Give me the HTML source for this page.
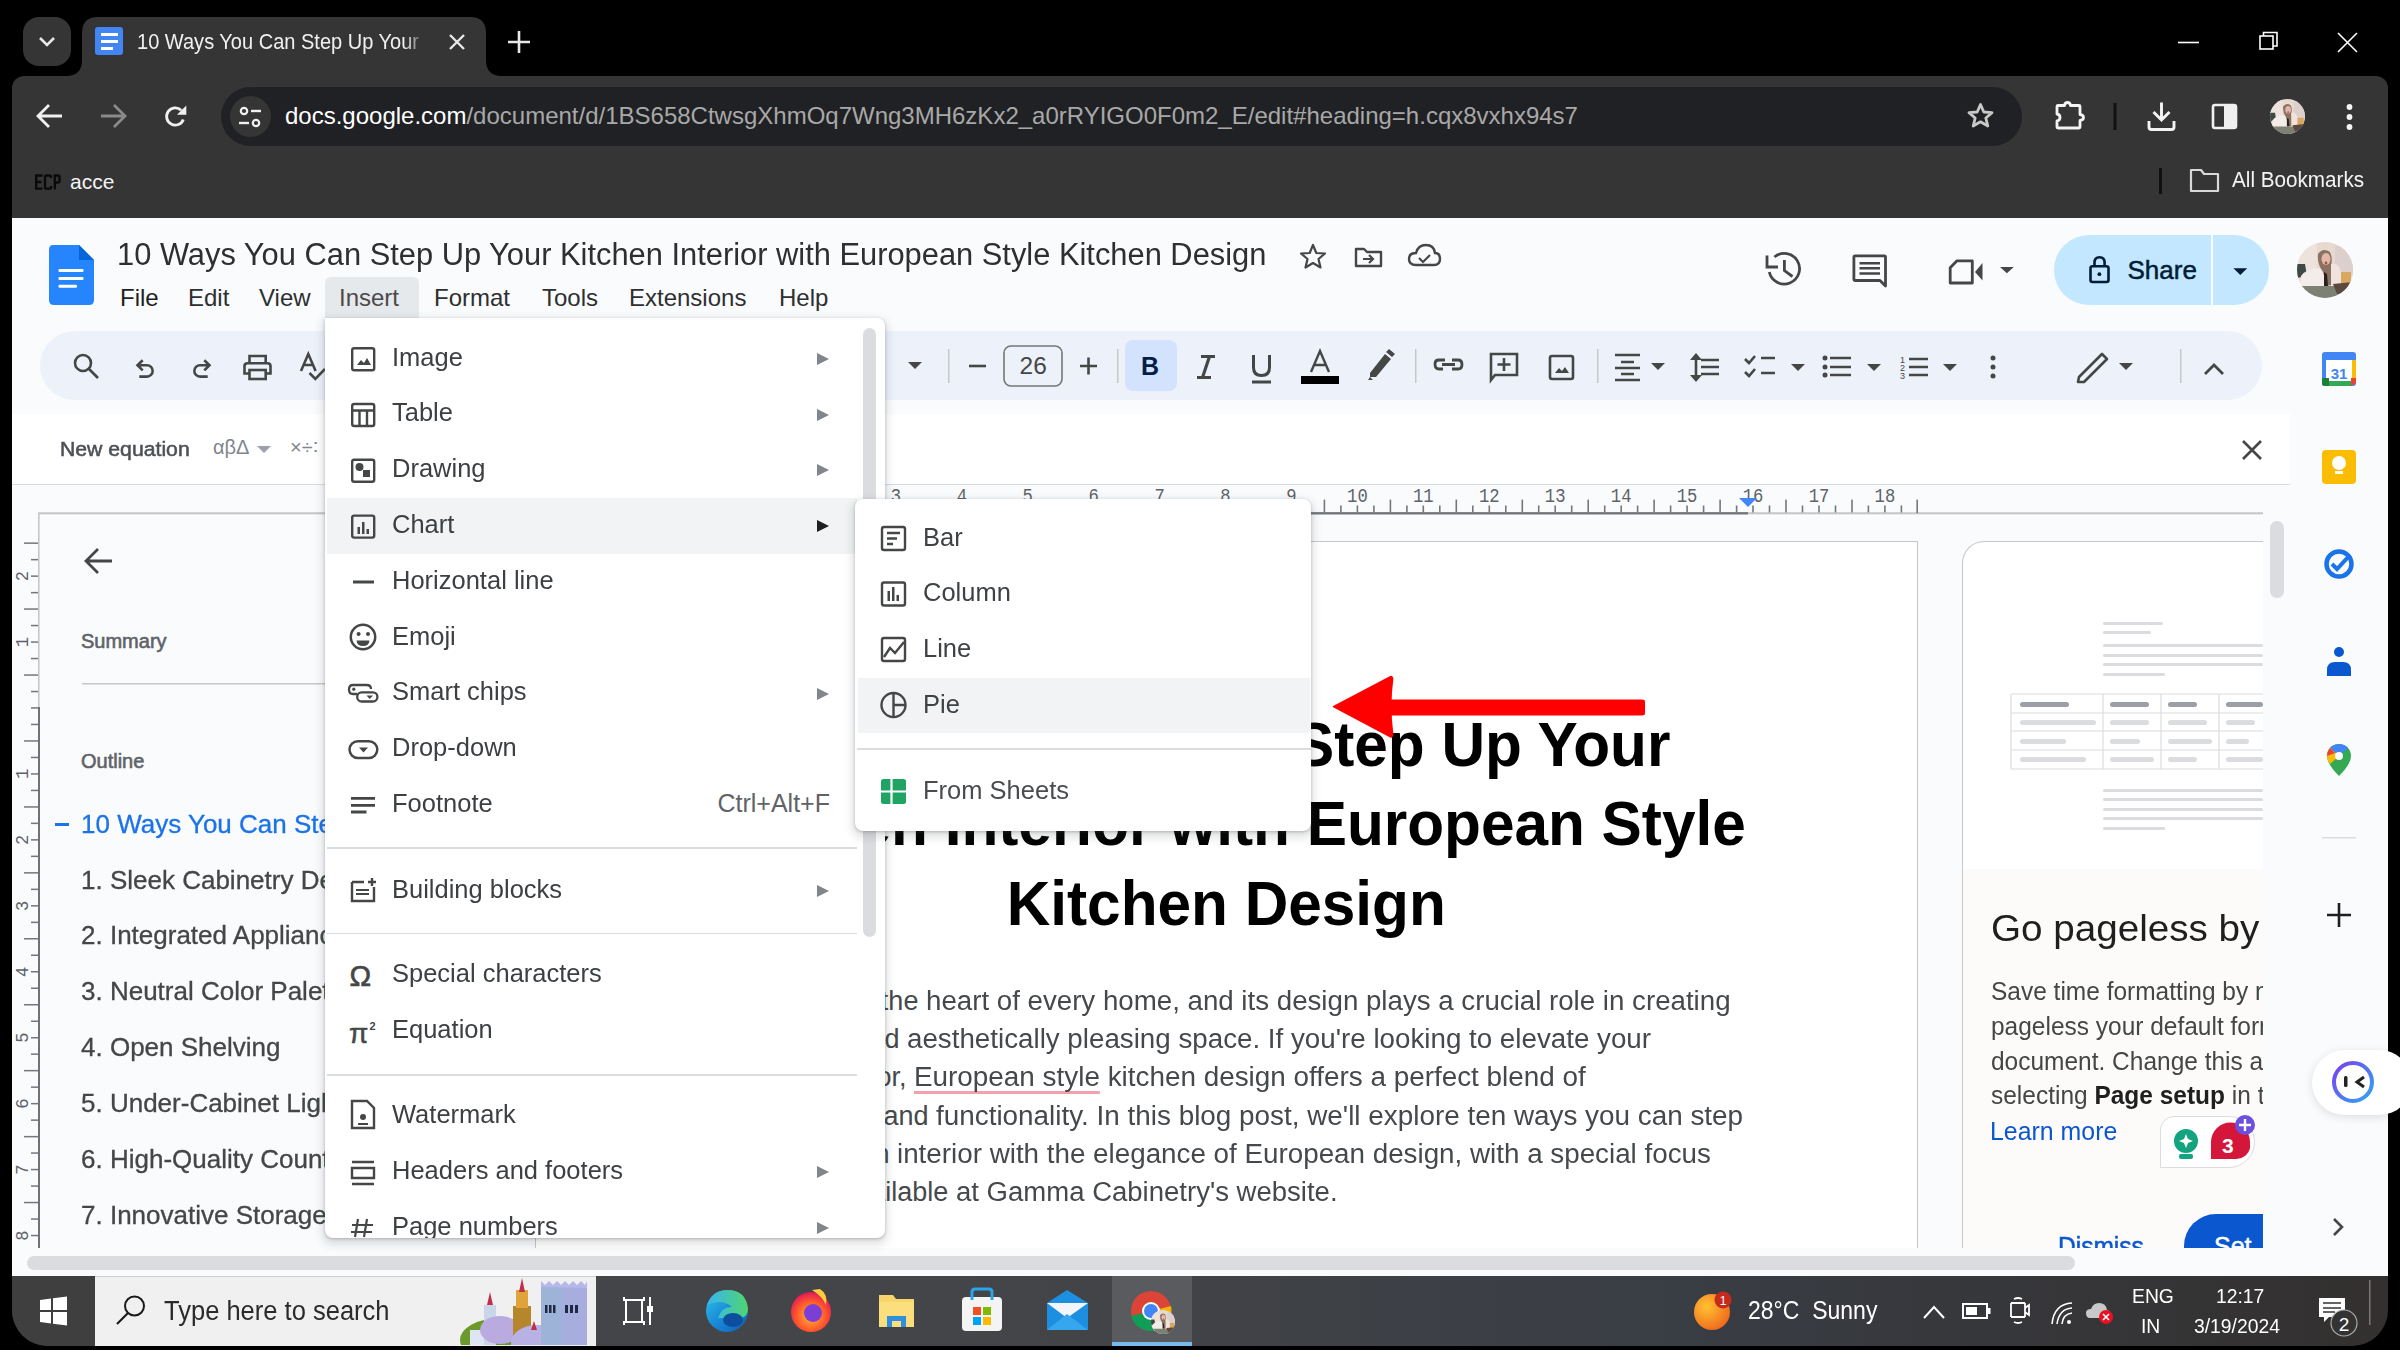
<!DOCTYPE html>
<html><head><meta charset="utf-8">
<style>
*{margin:0;padding:0;box-sizing:border-box}
html,body{width:2400px;height:1350px;overflow:hidden;background:#000;font-family:"Liberation Sans",sans-serif}
.a{position:absolute}
.t{position:absolute;white-space:nowrap;line-height:1}
svg{position:absolute;overflow:visible}
</style></head><body>
<svg width="0" height="0" style="position:absolute"><defs>
<symbol id="av" viewBox="0 0 56 56">
 <clipPath id="avc"><circle cx="28" cy="28" r="28"/></clipPath>
 <g clip-path="url(#avc)">
  <rect width="56" height="56" fill="#e7d8d0"/>
  <rect x="0" y="0" width="20" height="30" fill="#eee2dc"/>
  <rect x="38" y="4" width="18" height="30" fill="#ddd0cc"/>
  <path d="M0 22 L8 22 L10 34 L0 36 Z" fill="#3f4a44"/>
  <path d="M2 50 L4 34 Q10 26 22 26 L30 32 L32 44 L20 48 Z" fill="#f3ece8"/>
  <path d="M21 12 Q26 5 33 10 Q36 16 34 24 L38 42 L30 44 L26 30 Q20 22 21 12 Z" fill="#8a7262"/>
  <ellipse cx="29" cy="17" rx="4.5" ry="6" fill="#e4b8a8"/>
  <circle cx="29" cy="21" r="1.4" fill="#b5484a"/>
  <path d="M27 30 L30 32 L31 44 L27 44 Z" fill="#2a211e"/>
  <path d="M34 22 Q42 20 44 30 L44 44 L34 44 Z" fill="#f0e2dd"/>
  <rect x="44" y="30" width="10" height="14" fill="#d9a860"/>
  <path d="M0 44 L56 44 L56 56 L0 56 Z" fill="#7d8174"/>
  <path d="M36 42 L56 40 L56 50 L40 52 Z" fill="#5c4940"/>
 </g>
</symbol></defs></svg>
<!-- ============ CHROME TAB STRIP ============ -->
<div class="a" style="left:23px;top:17px;width:48px;height:49px;background:#353535;border-radius:16px"></div>
<svg style="left:0;top:0" width="2400" height="80">
  <path d="M40 38 L47 45 L54 38" stroke="#e8e8e8" stroke-width="2.6" fill="none"/>
</svg>
<!-- active tab -->
<svg style="left:0;top:0" width="600" height="80">
  <path d="M66 76 Q82 76 82 60 L82 33 Q82 17 98 17 L470 17 Q486 17 486 33 L486 60 Q486 76 502 76 Z" fill="#353535"/>
</svg>
<div class="a" style="left:95px;top:27px;width:28px;height:28px;background:#4285f4;border-radius:3px"></div>
<div class="a" style="left:101px;top:33px;width:17px;height:3px;background:#fff"></div>
<div class="a" style="left:101px;top:40px;width:17px;height:3px;background:#fff"></div>
<div class="a" style="left:101px;top:47px;width:12px;height:3px;background:#fff"></div>
<div class="a" style="left:137px;top:25px;width:295px;height:35px;overflow:hidden"><div class="t" style="left:0;top:6.4px;font-size:22px;color:#f0f0f0;transform:scaleX(0.91);transform-origin:0 0">10 Ways You Can Step Up Your Kitchen</div></div>
<div class="a" style="left:405px;top:20px;width:30px;height:45px;background:linear-gradient(90deg,rgba(53,53,53,0),#353535 70%)"></div>
<svg style="left:0;top:0" width="2400" height="80">
  <path d="M450 35 L464 49 M464 35 L450 49" stroke="#e8e8e8" stroke-width="2.4"/>
  <path d="M519 31 L519 53 M508 42 L530 42" stroke="#e8e8e8" stroke-width="2.6"/>
  <path d="M2178 42.5 L2199 42.5" stroke="#fff" stroke-width="1.6"/>
  <rect x="2260" y="36" width="13" height="13" stroke="#fff" stroke-width="1.6" fill="none"/>
  <path d="M2263.5 36 L2263.5 32.5 L2277 32.5 L2277 46 L2273 46" stroke="#fff" stroke-width="1.6" fill="none"/>
  <path d="M2338 33 L2357 52 M2357 33 L2338 52" stroke="#fff" stroke-width="1.6"/>
</svg>
<!-- ============ CHROME TOOLBAR ============ -->
<div class="a" style="left:12px;top:76px;width:2376px;height:142px;background:#353535;border-radius:12px 12px 0 0"></div>
<svg style="left:0;top:76px" width="2400" height="142">
  <path d="M38 40 L62 40 M49 29 L38 40 L49 51" stroke="#f0f0f0" stroke-width="2.8" fill="none"/>
  <path d="M101 40 L125 40 M114 29 L125 40 L114 51" stroke="#8a8a8a" stroke-width="2.8" fill="none"/>
  <path d="M183.3 43.4 A8.6 8.6 0 1 1 181.2 34.3" stroke="#f0f0f0" stroke-width="2.8" fill="none"/>
  <path d="M186.3 29.5 L186.3 38.8 L177 38.8 Z" fill="#f0f0f0"/>
</svg>
<div class="a" style="left:221px;top:87px;width:1801px;height:59px;background:#202124;border-radius:30px"></div>
<div class="a" style="left:230px;top:96px;width:41px;height:41px;background:#353535;border-radius:50%"></div>
<svg style="left:0;top:76px" width="2400" height="142">
  <circle cx="244" cy="35" r="3.2" stroke="#f0f0f0" stroke-width="2.2" fill="none"/>
  <path d="M251 35 L261 35" stroke="#f0f0f0" stroke-width="2.4"/>
  <circle cx="256" cy="47" r="3.2" stroke="#f0f0f0" stroke-width="2.2" fill="none"/>
  <path d="M239 47 L249 47" stroke="#f0f0f0" stroke-width="2.4"/>
</svg>
<div class="t" style="left:285px;top:104px;font-size:24px;color:#fff">docs.google.com<span style="color:#a8a8a8">/document/d/1BS658CtwsgXhmOq7Wng3MH6zKx2_a0rRYIGO0F0m2_E/edit#heading=h.cqx8vxhx94s7</span></div>
<svg style="left:0;top:76px" width="2400" height="142">
  <path d="M1980.5 28.5 L1983.8 36 L1992 36.6 L1985.8 42 L1987.8 50 L1980.5 45.8 L1973.2 50 L1975.2 42 L1969 36.6 L1977.2 36 Z" stroke="#c8c8c8" stroke-width="2.8" fill="none" stroke-linejoin="round"/>
  <path d="M2058 29.5 L2064.5 29.5 Q2065 26.5 2067.5 26.5 Q2070 26.5 2070.5 29.5 L2079 29.5 Q2080 29.5 2080 30.5 L2080 38.5 Q2083.5 39 2083.5 41.5 Q2083.5 44 2080 44.5 L2080 51 Q2080 52 2079 52 L2058 52 Q2057 52 2057 51 L2057 45 Q2060 44.5 2060 41.5 Q2060 38.5 2057 38 L2057 30.5 Q2057 29.5 2058 29.5 Z" stroke="#f4f4f4" stroke-width="2.8" fill="none" stroke-linejoin="round"/>
  <path d="M2115 27 L2115 54" stroke="#111" stroke-width="3"/>
  <path d="M2161.5 26.5 L2161.5 43.5 M2153.5 36 L2161.5 44 L2169.5 36 M2149 45 L2149 51 Q2149 53.5 2151.5 53.5 L2171.5 53.5 Q2174 53.5 2174 51 L2174 45" stroke="#f4f4f4" stroke-width="2.9" fill="none"/>
  <rect x="2213" y="29" width="23" height="23" rx="2" stroke="#f0f0f0" stroke-width="2.6" fill="none"/>
  <rect x="2224" y="29" width="12" height="23" fill="#f0f0f0"/>
  <circle cx="2349.5" cy="31" r="2.9" fill="#f4f4f4"/><circle cx="2349.5" cy="41" r="2.9" fill="#f4f4f4"/><circle cx="2349.5" cy="51" r="2.9" fill="#f4f4f4"/>
</svg>
<svg style="left:2269.5px;top:98.5px;filter:blur(0.5px)" width="35" height="35" viewBox="0 0 56 56"><use href="#av"/></svg>
<!-- bookmarks bar -->
<svg style="left:0;top:0" width="200" height="220"><g stroke="#0a0a0a" stroke-width="2.4" fill="none">
 <path d="M42.5 175.5 L36.2 175.5 L36.2 188.6 L42.5 188.6 M36.2 182 L41.5 182"/>
 <path d="M51 178 L51 176.8 Q51 175.5 49.5 175.5 L46.5 175.5 Q45 175.5 45 177 L45 187.2 Q45 188.6 46.5 188.6 L49.5 188.6 Q51 188.6 51 187.2 L51 186"/>
 <path d="M54.8 189.5 L54.8 175.5 L58 175.5 Q59.5 175.5 59.5 177 L59.5 181 Q59.5 182.5 58 182.5 L54.8 182.5"/>
</g></svg>
<div class="t" style="left:70px;top:170.5px;font-size:21px;color:#f4f4f4">acce</div>
<div class="a" style="left:2159px;top:168px;width:3px;height:26px;background:#111"></div>
<svg style="left:0;top:150px" width="2400" height="70">
  <path d="M2191 20 L2201 20 L2204 24 L2218 24 L2218 41 L2191 41 Z" stroke="#d8d8d8" stroke-width="2.2" fill="none" stroke-linejoin="round"/>
</svg>
<div class="t" style="left:2231.5px;top:169.2px;font-size:22px;color:#f4f4f4;transform:scaleX(0.94);transform-origin:0 0">All Bookmarks</div>

<!-- ============ DOCS AREA ============ -->

<div class="a" style="left:12px;top:218px;width:2376px;height:1058px;background:#f9fbfd"></div>
<!-- docs logo -->
<svg style="left:0;top:0" width="2400" height="1350">
  <path d="M53 245 L79 245 L94 260 L94 300 Q94 305 89 305 L54 305 Q49 305 49 300 L49 250 Q49 245 53 245 Z" fill="#2684fc"/>
  <path d="M79 245 L94 260 L79 260 Z" fill="#0066da"/>
  <rect x="58.5" y="269.1" width="25" height="3" rx="1" fill="#fff"/>
  <rect x="58.5" y="277.1" width="25" height="3" rx="1" fill="#fff"/>
  <rect x="58.5" y="284.8" width="18.5" height="3" rx="1" fill="#fff"/>
</svg>
<div class="t" style="left:117px;top:238.6px;font-size:31px;color:#2f2f2f;transform:scaleX(0.995);transform-origin:0 0">10 Ways You Can Step Up Your Kitchen Interior with European Style Kitchen Design</div>
<svg style="left:0;top:0" width="2400" height="1350">
  <path d="M1313 245 L1316.3 253 L1325 253.5 L1318.5 259 L1320.5 267.5 L1313 263 L1305.5 267.5 L1307.5 259 L1301 253.5 L1309.7 253 Z" stroke="#444746" stroke-width="2.2" fill="none" stroke-linejoin="round"/>
  <path d="M1356 249 L1364 249 L1367 252 L1381 252 L1381 266 L1356 266 Z" stroke="#444746" stroke-width="2.4" fill="none" stroke-linejoin="round"/>
  <path d="M1363 259 L1373 259 M1369 255 L1373 259 L1369 263" stroke="#444746" stroke-width="2.2" fill="none"/>
  <path d="M1416 265 Q1409 265 1409 259 Q1409 253 1416 253 Q1418 245 1426 245 Q1434 245 1435 253 Q1440 253 1440 259 Q1440 265 1434 265 Z" stroke="#444746" stroke-width="2.4" fill="none"/>
  <path d="M1419 258 L1423 262 L1430 255" stroke="#444746" stroke-width="2.2" fill="none"/>
</svg>
<div class="a" style="left:325px;top:277px;width:94px;height:41px;background:#e6e9ec;border-radius:6px 6px 0 0"></div>
<div class="t" style="left:120px;top:286px;font-size:24px;color:#1f1f1f;word-spacing:0">File</div>
<div class="t" style="left:188px;top:286px;font-size:24px;color:#2f2f2f">Edit</div>
<div class="t" style="left:259px;top:286px;font-size:24px;color:#2f2f2f">View</div>
<div class="t" style="left:339px;top:286px;font-size:24px;color:#4a4a4a">Insert</div>
<div class="t" style="left:434px;top:286px;font-size:24px;color:#2f2f2f">Format</div>
<div class="t" style="left:542px;top:286px;font-size:24px;color:#2f2f2f">Tools</div>
<div class="t" style="left:629px;top:286px;font-size:24px;color:#2f2f2f">Extensions</div>
<div class="t" style="left:779px;top:286px;font-size:24px;color:#2f2f2f">Help</div>
<!-- right header -->
<svg style="left:0;top:0" width="2400" height="1350">
  <path d="M1774.4 257 A15.3 15.3 0 1 1 1769.3 272" stroke="#444746" stroke-width="2.8" fill="none"/>
  <path d="M1767 255.5 L1767 267 L1778 267" stroke="#444746" stroke-width="2.8" fill="none"/>
  <path d="M1784.4 260 L1784.4 270.6 L1792.5 276.5" stroke="#444746" stroke-width="2.8" fill="none"/>
  <path d="M1855 255.8 L1884.5 255.8 Q1885.5 255.8 1885.5 257 L1885.5 286 L1880 280.5 L1855 280.5 Q1853.9 280.5 1853.9 279.5 L1853.9 257 Q1853.9 255.8 1855 255.8 Z" stroke="#444746" stroke-width="2.8" fill="none" stroke-linejoin="round"/>
  <path d="M1859.5 263.2 L1880 263.2 M1859.5 268.3 L1880 268.3 M1859.5 273.5 L1880 273.5" stroke="#444746" stroke-width="2.6"/>
  <path d="M1950.2 267.8 L1957 260.8 L1972.3 260.8 L1972.3 283 L1950.2 283 Z" stroke="#444746" stroke-width="2.8" fill="none" stroke-linejoin="round"/>
  <path d="M1975 272 L1982.5 263 L1982.5 280.5 Z" fill="#444746"/>
  <path d="M2000 267 L2013.8 267 L2006.9 273.3 Z" fill="#444746"/>
</svg>
<div class="a" style="left:2054px;top:235px;width:215px;height:70px;background:#c2e7ff;border-radius:35px"></div>
<div class="a" style="left:2211px;top:235px;width:2px;height:70px;background:#f9fbfd"></div>
<svg style="left:0;top:0" width="2400" height="1350">
  <rect x="2090.5" y="266.2" width="18" height="15.8" rx="2" stroke="#001d35" stroke-width="2.6" fill="none"/>
  <path d="M2094.5 266 L2094.5 262.5 Q2094.5 257.2 2099.5 257.2 Q2104.6 257.2 2104.6 262.5 L2104.6 266" stroke="#001d35" stroke-width="2.6" fill="none"/>
  <circle cx="2099.4" cy="274.2" r="1.9" fill="#001d35"/>
  <path d="M2233.4 268.2 L2247.2 268.2 L2240.3 275 Z" fill="#001d35"/>
</svg>
<div class="t" style="left:2127.5px;top:256.5px;font-size:26px;color:#001d35;-webkit-text-stroke:0.5px #001d35">Share</div>
<svg style="left:2297px;top:241.7px;filter:blur(0.7px)" width="56" height="56" viewBox="0 0 56 56"><use href="#av"/></svg>
<!-- toolbar pill -->
<div class="a" style="left:40px;top:331px;width:2222px;height:69px;background:#edf2fa;border-radius:35px"></div>
<svg style="left:0;top:0" width="2400" height="1350">
 <g stroke="#444746" fill="none" stroke-width="2.6">
  <circle cx="83" cy="363" r="8"/><path d="M89 369 L98 378"/>
  <path d="M139.3 376.6 L147 376.6 A5.65 5.65 0 0 0 147 365.3 L137.5 365.3 M142.7 360.2 L137.5 365.3 L142.7 370.4" stroke-width="2.6"/>
  <path d="M207.7 376.6 L200 376.6 A5.65 5.65 0 0 1 200 365.3 L209.5 365.3 M204.3 360.2 L209.5 365.3 L204.3 370.4" stroke-width="2.6"/>
  <path d="M249.5 362.5 L249.5 356 L265.7 356 L265.7 362.5" stroke-width="2.6"/>
  <path d="M249.5 373.5 L244.5 373.5 L244.5 366 Q244.5 363.2 247.5 363.2 L267.5 363.2 Q270.5 363.2 270.5 366 L270.5 373.5 L265.7 373.5" stroke-width="2.6"/>
  <rect x="249.5" y="370" width="16.2" height="9" stroke-width="2.6"/>
  <path d="M301 371 L308.3 354 L315.6 371 M303.6 365 L313 365" stroke-width="2.6"/>
  <path d="M309.5 373 L315.3 378.8 L325 369" stroke-width="2.6"/>
  <path d="M908 362 L922 362 L915 369 Z" fill="#444746" stroke="none"/>
 </g>
 <g fill="#c7c7c7"><rect x="948" y="349" width="1.5" height="34"/><rect x="1117" y="349" width="1.5" height="34"/><rect x="1415" y="349" width="1.5" height="34"/><rect x="1597" y="349" width="1.5" height="34"/><rect x="2180" y="349" width="1.5" height="34"/></g>
 <g stroke="#444746" fill="none" stroke-width="2.6">
  <path d="M969 366 L986 366"/>
  <rect x="1004" y="346" width="58" height="40" rx="7" stroke="#747775" stroke-width="1.6"/>
  <path d="M1080 366 L1097 366 M1088.5 357.5 L1088.5 374.5"/>
 </g>
 <rect x="1125" y="340" width="52" height="51" rx="8" fill="#d3e3fd"/>
 <g stroke="#444746" fill="none" stroke-width="2.6">
  <path d="M1201 356.5 L1215 356.5 M1197 377.5 L1211 377.5 M1209.5 356.5 L1202.5 377.5" stroke-width="3.2"/>
  <path d="M1253.5 355 L1253.5 367.5 Q1253.5 375.5 1261.5 375.5 Q1269.5 375.5 1269.5 367.5 L1269.5 355 M1252 382 L1271 382" stroke-width="3"/>
  <path d="M1311 372 L1320 351 L1329 372 M1314 365 L1326 365" stroke-width="2.4"/>
 </g>
 <rect x="1301" y="376" width="38" height="8" fill="#000"/>
 <path d="M1370 373 L1385 354 L1391 359 L1376 377 L1370 377 Z M1386 352 L1389 349 L1395 354 L1392 357 Z M1370 377 L1368 380 L1373 380 Z" fill="#444746"/>
 <g stroke="#444746" fill="none" stroke-width="2.6">
  <path d="M1443 369 L1439 369 Q1435 369 1435 364 Q1435 360 1439 360 L1445 360 M1452 360 L1458 360 Q1462 360 1462 364.5 Q1462 369 1458 369 L1452 369 M1442 364.5 L1455 364.5" stroke-width="2.8"/>
  <path d="M1491 354 L1517 354 L1517 375 L1495 375 L1491 380 Z M1504 358 L1504 371 M1497.5 364.5 L1510.5 364.5"/>
  <rect x="1550" y="356" width="23" height="23" rx="2"/>
 </g>
 <path d="M1555 373 L1559 368 L1562 371 L1565 367 L1569 373 Z" fill="#444746"/>
 <g stroke="#444746" stroke-width="2.6">
  <path d="M1615 355 L1640 355 M1621 362 L1634 362 M1615 368 L1640 368 M1621 374 L1634 374 M1615 380 L1640 380"/>
  <path d="M1701 360 L1719 360 M1701 367 L1719 367 M1701 374 L1719 374"/>
  <path d="M1696 355 L1696 380"/>
  <path d="M1761 358 L1775 358 M1761 373 L1775 373"/>
  <path d="M1745 359 L1749 363 L1755 356 M1745 372 L1749 376 L1755 369" fill="none"/>
  <path d="M1830 358 L1851 358 M1830 367 L1851 367 M1830 375 L1851 375"/>
  <path d="M1909 359 L1928 359 M1909 367 L1928 367 M1909 375 L1928 375"/>
 </g>
 <path d="M1690 360 L1696 353 L1702 360 Z M1690 375 L1696 382 L1702 375 Z" fill="#444746"/>
 <g fill="#444746">
  <circle cx="1825" cy="358" r="2.5"/><circle cx="1825" cy="367" r="2.5"/><circle cx="1825" cy="375" r="2.5"/>
  <circle cx="1993" cy="358" r="2.5"/><circle cx="1993" cy="367" r="2.5"/><circle cx="1993" cy="376" r="2.5"/>
  <path d="M1651 363 L1665 363 L1658 370 Z"/><path d="M1791 364 L1805 364 L1798 371 Z"/><path d="M1867 364 L1881 364 L1874 371 Z"/><path d="M1943 364 L1957 364 L1950 371 Z"/><path d="M2119 363 L2133 363 L2126 370 Z"/>
 </g>
 <text x="1900" y="363" font-size="9" fill="#444746" font-family="Liberation Sans">1</text>
 <text x="1900" y="371" font-size="9" fill="#444746" font-family="Liberation Sans">2</text>
 <text x="1900" y="379" font-size="9" fill="#444746" font-family="Liberation Sans">3</text>
 <path d="M2079 377 L2102 354 L2107 359 L2084 382 L2078 382 Z" stroke="#444746" stroke-width="2.6" fill="none" stroke-linejoin="round"/>
 <path d="M2205 374 L2214 365 L2223 374" stroke="#444746" stroke-width="2.8" fill="none"/>
</svg>
<div class="t" style="left:1019.5px;top:353.5px;font-size:24.5px;color:#444746">26</div>
<div class="t" style="left:1141px;top:354px;font-size:25px;color:#041e49;font-weight:bold">B</div>



<!-- equation bar -->
<div class="a" style="left:12px;top:414px;width:2278px;height:71px;background:#fff;border-bottom:1.5px solid #dadce0"></div>
<div class="t" style="left:59.5px;top:438.2px;font-size:21px;color:#4d5156;-webkit-text-stroke:0.55px #4d5156;transform:scaleX(1.01);transform-origin:0 0">New equation</div>
<div class="t" style="left:213px;top:437px;font-size:20px;color:#80868b">αβΔ</div>
<svg style="left:0;top:0" width="2400" height="1350">
 <path d="M257 446 L271 446 L264 453 Z" fill="#9aa0a6"/>
 <path d="M2243 441 L2261 459 M2261 441 L2243 459" stroke="#444746" stroke-width="2.6"/>
</svg>
<div class="t" style="left:290px;top:437px;font-size:20px;color:#80868b">×÷∶</div>
<!-- page -->
<div class="a" style="left:535px;top:541px;width:1383px;height:707px;background:#fff;border:1.5px solid #c7c7c7;border-bottom:none"></div>
<svg style="left:0;top:0" width="2400" height="1350">
<rect x="548.8" y="505.5" width="1.6" height="8" fill="#74787c"/>
<text transform="translate(566.1,502) scale(0.84,1)" font-size="20.5" fill="#5f6368" text-anchor="middle" font-family="Liberation Mono">2</text>
<rect x="565.3" y="505.5" width="1.6" height="8" fill="#74787c"/>
<rect x="581.8" y="505.5" width="1.6" height="8" fill="#74787c"/>
<rect x="598.3" y="499.6" width="1.6" height="13.6" fill="#74787c"/>
<rect x="614.8" y="505.5" width="1.6" height="8" fill="#74787c"/>
<text transform="translate(632.1,502) scale(0.84,1)" font-size="20.5" fill="#5f6368" text-anchor="middle" font-family="Liberation Mono">1</text>
<rect x="631.3" y="505.5" width="1.6" height="8" fill="#74787c"/>
<rect x="647.7" y="505.5" width="1.6" height="8" fill="#74787c"/>
<rect x="664.2" y="499.6" width="1.6" height="13.6" fill="#74787c"/>
<rect x="680.7" y="505.5" width="1.6" height="8" fill="#74787c"/>
<rect x="697.2" y="505.5" width="1.6" height="8" fill="#74787c"/>
<rect x="713.7" y="505.5" width="1.6" height="8" fill="#74787c"/>
<rect x="730.2" y="499.6" width="1.6" height="13.6" fill="#74787c"/>
<rect x="746.7" y="505.5" width="1.6" height="8" fill="#74787c"/>
<text transform="translate(763.9,502) scale(0.84,1)" font-size="20.5" fill="#5f6368" text-anchor="middle" font-family="Liberation Mono">1</text>
<rect x="763.1" y="505.5" width="1.6" height="8" fill="#74787c"/>
<rect x="779.6" y="505.5" width="1.6" height="8" fill="#74787c"/>
<rect x="796.1" y="499.6" width="1.6" height="13.6" fill="#74787c"/>
<rect x="812.6" y="505.5" width="1.6" height="8" fill="#74787c"/>
<text transform="translate(829.9,502) scale(0.84,1)" font-size="20.5" fill="#5f6368" text-anchor="middle" font-family="Liberation Mono">2</text>
<rect x="829.1" y="505.5" width="1.6" height="8" fill="#74787c"/>
<rect x="845.6" y="505.5" width="1.6" height="8" fill="#74787c"/>
<rect x="862.1" y="499.6" width="1.6" height="13.6" fill="#74787c"/>
<rect x="878.5" y="505.5" width="1.6" height="8" fill="#74787c"/>
<text transform="translate(895.8,502) scale(0.84,1)" font-size="20.5" fill="#5f6368" text-anchor="middle" font-family="Liberation Mono">3</text>
<rect x="895.0" y="505.5" width="1.6" height="8" fill="#74787c"/>
<rect x="911.5" y="505.5" width="1.6" height="8" fill="#74787c"/>
<rect x="928.0" y="499.6" width="1.6" height="13.6" fill="#74787c"/>
<rect x="944.5" y="505.5" width="1.6" height="8" fill="#74787c"/>
<text transform="translate(961.8,502) scale(0.84,1)" font-size="20.5" fill="#5f6368" text-anchor="middle" font-family="Liberation Mono">4</text>
<rect x="961.0" y="505.5" width="1.6" height="8" fill="#74787c"/>
<rect x="977.4" y="505.5" width="1.6" height="8" fill="#74787c"/>
<rect x="993.9" y="499.6" width="1.6" height="13.6" fill="#74787c"/>
<rect x="1010.4" y="505.5" width="1.6" height="8" fill="#74787c"/>
<text transform="translate(1027.7,502) scale(0.84,1)" font-size="20.5" fill="#5f6368" text-anchor="middle" font-family="Liberation Mono">5</text>
<rect x="1026.9" y="505.5" width="1.6" height="8" fill="#74787c"/>
<rect x="1043.4" y="505.5" width="1.6" height="8" fill="#74787c"/>
<rect x="1059.9" y="499.6" width="1.6" height="13.6" fill="#74787c"/>
<rect x="1076.4" y="505.5" width="1.6" height="8" fill="#74787c"/>
<text transform="translate(1093.6,502) scale(0.84,1)" font-size="20.5" fill="#5f6368" text-anchor="middle" font-family="Liberation Mono">6</text>
<rect x="1092.8" y="505.5" width="1.6" height="8" fill="#74787c"/>
<rect x="1109.3" y="505.5" width="1.6" height="8" fill="#74787c"/>
<rect x="1125.8" y="499.6" width="1.6" height="13.6" fill="#74787c"/>
<rect x="1142.3" y="505.5" width="1.6" height="8" fill="#74787c"/>
<text transform="translate(1159.6,502) scale(0.84,1)" font-size="20.5" fill="#5f6368" text-anchor="middle" font-family="Liberation Mono">7</text>
<rect x="1158.8" y="505.5" width="1.6" height="8" fill="#74787c"/>
<rect x="1175.3" y="505.5" width="1.6" height="8" fill="#74787c"/>
<rect x="1191.7" y="499.6" width="1.6" height="13.6" fill="#74787c"/>
<rect x="1208.2" y="505.5" width="1.6" height="8" fill="#74787c"/>
<text transform="translate(1225.5,502) scale(0.84,1)" font-size="20.5" fill="#5f6368" text-anchor="middle" font-family="Liberation Mono">8</text>
<rect x="1224.7" y="505.5" width="1.6" height="8" fill="#74787c"/>
<rect x="1241.2" y="505.5" width="1.6" height="8" fill="#74787c"/>
<rect x="1257.7" y="499.6" width="1.6" height="13.6" fill="#74787c"/>
<rect x="1274.2" y="505.5" width="1.6" height="8" fill="#74787c"/>
<text transform="translate(1291.5,502) scale(0.84,1)" font-size="20.5" fill="#5f6368" text-anchor="middle" font-family="Liberation Mono">9</text>
<rect x="1290.7" y="505.5" width="1.6" height="8" fill="#74787c"/>
<rect x="1307.1" y="505.5" width="1.6" height="8" fill="#74787c"/>
<rect x="1323.6" y="499.6" width="1.6" height="13.6" fill="#74787c"/>
<rect x="1340.1" y="505.5" width="1.6" height="8" fill="#74787c"/>
<text transform="translate(1357.4,502) scale(0.84,1)" font-size="20.5" fill="#5f6368" text-anchor="middle" font-family="Liberation Mono">10</text>
<rect x="1356.6" y="505.5" width="1.6" height="8" fill="#74787c"/>
<rect x="1373.1" y="505.5" width="1.6" height="8" fill="#74787c"/>
<rect x="1389.6" y="499.6" width="1.6" height="13.6" fill="#74787c"/>
<rect x="1406.1" y="505.5" width="1.6" height="8" fill="#74787c"/>
<text transform="translate(1423.3,502) scale(0.84,1)" font-size="20.5" fill="#5f6368" text-anchor="middle" font-family="Liberation Mono">11</text>
<rect x="1422.5" y="505.5" width="1.6" height="8" fill="#74787c"/>
<rect x="1439.0" y="505.5" width="1.6" height="8" fill="#74787c"/>
<rect x="1455.5" y="499.6" width="1.6" height="13.6" fill="#74787c"/>
<rect x="1472.0" y="505.5" width="1.6" height="8" fill="#74787c"/>
<text transform="translate(1489.3,502) scale(0.84,1)" font-size="20.5" fill="#5f6368" text-anchor="middle" font-family="Liberation Mono">12</text>
<rect x="1488.5" y="505.5" width="1.6" height="8" fill="#74787c"/>
<rect x="1505.0" y="505.5" width="1.6" height="8" fill="#74787c"/>
<rect x="1521.5" y="499.6" width="1.6" height="13.6" fill="#74787c"/>
<rect x="1537.9" y="505.5" width="1.6" height="8" fill="#74787c"/>
<text transform="translate(1555.2,502) scale(0.84,1)" font-size="20.5" fill="#5f6368" text-anchor="middle" font-family="Liberation Mono">13</text>
<rect x="1554.4" y="505.5" width="1.6" height="8" fill="#74787c"/>
<rect x="1570.9" y="505.5" width="1.6" height="8" fill="#74787c"/>
<rect x="1587.4" y="499.6" width="1.6" height="13.6" fill="#74787c"/>
<rect x="1603.9" y="505.5" width="1.6" height="8" fill="#74787c"/>
<text transform="translate(1621.2,502) scale(0.84,1)" font-size="20.5" fill="#5f6368" text-anchor="middle" font-family="Liberation Mono">14</text>
<rect x="1620.4" y="505.5" width="1.6" height="8" fill="#74787c"/>
<rect x="1636.8" y="505.5" width="1.6" height="8" fill="#74787c"/>
<rect x="1653.3" y="499.6" width="1.6" height="13.6" fill="#74787c"/>
<rect x="1669.8" y="505.5" width="1.6" height="8" fill="#74787c"/>
<text transform="translate(1687.1,502) scale(0.84,1)" font-size="20.5" fill="#5f6368" text-anchor="middle" font-family="Liberation Mono">15</text>
<rect x="1686.3" y="505.5" width="1.6" height="8" fill="#74787c"/>
<rect x="1702.8" y="505.5" width="1.6" height="8" fill="#74787c"/>
<rect x="1719.3" y="499.6" width="1.6" height="13.6" fill="#74787c"/>
<rect x="1735.8" y="505.5" width="1.6" height="8" fill="#74787c"/>
<text transform="translate(1753.0,502) scale(0.84,1)" font-size="20.5" fill="#5f6368" text-anchor="middle" font-family="Liberation Mono">16</text>
<rect x="1752.2" y="505.5" width="1.6" height="8" fill="#74787c"/>
<rect x="1768.7" y="505.5" width="1.6" height="8" fill="#74787c"/>
<rect x="1785.2" y="499.6" width="1.6" height="13.6" fill="#74787c"/>
<rect x="1801.7" y="505.5" width="1.6" height="8" fill="#74787c"/>
<text transform="translate(1819.0,502) scale(0.84,1)" font-size="20.5" fill="#5f6368" text-anchor="middle" font-family="Liberation Mono">17</text>
<rect x="1818.2" y="505.5" width="1.6" height="8" fill="#74787c"/>
<rect x="1834.7" y="505.5" width="1.6" height="8" fill="#74787c"/>
<rect x="1851.2" y="499.6" width="1.6" height="13.6" fill="#74787c"/>
<rect x="1867.6" y="505.5" width="1.6" height="8" fill="#74787c"/>
<text transform="translate(1884.9,502) scale(0.84,1)" font-size="20.5" fill="#5f6368" text-anchor="middle" font-family="Liberation Mono">18</text>
<rect x="1884.1" y="505.5" width="1.6" height="8" fill="#74787c"/>
<rect x="1900.6" y="505.5" width="1.6" height="8" fill="#74787c"/>
<rect x="38" y="512.3" width="2225" height="2" fill="#c2c4c6"/>
<rect x="698" y="512.2" width="1050" height="2.2" fill="#6f7377"/>
<rect x="1916.4" y="499.6" width="1.6" height="13.6" fill="#74787c"/>
<path d="M1739 498 L1757 498 L1748 507 Z" fill="#4285f4"/>
<rect x="24" y="542.4" width="15" height="1.5" fill="#74787c"/>
<rect x="31" y="558.9" width="8" height="1.5" fill="#74787c"/>
<text transform="translate(27.5,576.1) rotate(-90) scale(0.9,1)" font-size="19" fill="#5f6368" text-anchor="middle" font-family="Liberation Mono">2</text>
<rect x="31" y="575.4" width="8" height="1.5" fill="#74787c"/>
<rect x="31" y="591.9" width="8" height="1.5" fill="#74787c"/>
<rect x="24" y="608.3" width="15" height="1.5" fill="#74787c"/>
<rect x="31" y="624.8" width="8" height="1.5" fill="#74787c"/>
<text transform="translate(27.5,642.1) rotate(-90) scale(0.9,1)" font-size="19" fill="#5f6368" text-anchor="middle" font-family="Liberation Mono">1</text>
<rect x="31" y="641.3" width="8" height="1.5" fill="#74787c"/>
<rect x="31" y="657.8" width="8" height="1.5" fill="#74787c"/>
<rect x="24" y="674.3" width="15" height="1.5" fill="#74787c"/>
<rect x="31" y="690.8" width="8" height="1.5" fill="#74787c"/>
<rect x="31" y="707.2" width="8" height="1.5" fill="#74787c"/>
<rect x="31" y="723.7" width="8" height="1.5" fill="#74787c"/>
<rect x="24" y="740.2" width="15" height="1.5" fill="#74787c"/>
<rect x="31" y="756.7" width="8" height="1.5" fill="#74787c"/>
<text transform="translate(27.5,773.9) rotate(-90) scale(0.9,1)" font-size="19" fill="#5f6368" text-anchor="middle" font-family="Liberation Mono">1</text>
<rect x="31" y="773.2" width="8" height="1.5" fill="#74787c"/>
<rect x="31" y="789.7" width="8" height="1.5" fill="#74787c"/>
<rect x="24" y="806.2" width="15" height="1.5" fill="#74787c"/>
<rect x="31" y="822.6" width="8" height="1.5" fill="#74787c"/>
<text transform="translate(27.5,839.9) rotate(-90) scale(0.9,1)" font-size="19" fill="#5f6368" text-anchor="middle" font-family="Liberation Mono">2</text>
<rect x="31" y="839.1" width="8" height="1.5" fill="#74787c"/>
<rect x="31" y="855.6" width="8" height="1.5" fill="#74787c"/>
<rect x="24" y="872.1" width="15" height="1.5" fill="#74787c"/>
<rect x="31" y="888.6" width="8" height="1.5" fill="#74787c"/>
<text transform="translate(27.5,905.8) rotate(-90) scale(0.9,1)" font-size="19" fill="#5f6368" text-anchor="middle" font-family="Liberation Mono">3</text>
<rect x="31" y="905.1" width="8" height="1.5" fill="#74787c"/>
<rect x="31" y="921.6" width="8" height="1.5" fill="#74787c"/>
<rect x="24" y="938.0" width="15" height="1.5" fill="#74787c"/>
<rect x="31" y="954.5" width="8" height="1.5" fill="#74787c"/>
<text transform="translate(27.5,971.8) rotate(-90) scale(0.9,1)" font-size="19" fill="#5f6368" text-anchor="middle" font-family="Liberation Mono">4</text>
<rect x="31" y="971.0" width="8" height="1.5" fill="#74787c"/>
<rect x="31" y="987.5" width="8" height="1.5" fill="#74787c"/>
<rect x="24" y="1004.0" width="15" height="1.5" fill="#74787c"/>
<rect x="31" y="1020.5" width="8" height="1.5" fill="#74787c"/>
<text transform="translate(27.5,1037.7) rotate(-90) scale(0.9,1)" font-size="19" fill="#5f6368" text-anchor="middle" font-family="Liberation Mono">5</text>
<rect x="31" y="1037.0" width="8" height="1.5" fill="#74787c"/>
<rect x="31" y="1053.4" width="8" height="1.5" fill="#74787c"/>
<rect x="24" y="1069.9" width="15" height="1.5" fill="#74787c"/>
<rect x="31" y="1086.4" width="8" height="1.5" fill="#74787c"/>
<text transform="translate(27.5,1103.6) rotate(-90) scale(0.9,1)" font-size="19" fill="#5f6368" text-anchor="middle" font-family="Liberation Mono">6</text>
<rect x="31" y="1102.9" width="8" height="1.5" fill="#74787c"/>
<rect x="31" y="1119.4" width="8" height="1.5" fill="#74787c"/>
<rect x="24" y="1135.9" width="15" height="1.5" fill="#74787c"/>
<rect x="31" y="1152.3" width="8" height="1.5" fill="#74787c"/>
<text transform="translate(27.5,1169.6) rotate(-90) scale(0.9,1)" font-size="19" fill="#5f6368" text-anchor="middle" font-family="Liberation Mono">7</text>
<rect x="31" y="1168.8" width="8" height="1.5" fill="#74787c"/>
<rect x="31" y="1185.3" width="8" height="1.5" fill="#74787c"/>
<rect x="24" y="1201.8" width="15" height="1.5" fill="#74787c"/>
<rect x="31" y="1218.3" width="8" height="1.5" fill="#74787c"/>
<text transform="translate(27.5,1235.5) rotate(-90) scale(0.9,1)" font-size="19" fill="#5f6368" text-anchor="middle" font-family="Liberation Mono">8</text>
<rect x="31" y="1234.8" width="8" height="1.5" fill="#74787c"/>
<rect x="38" y="513" width="1.6" height="194" fill="#c7c7c7"/>
<rect x="38" y="707" width="2" height="541" fill="#6f7377"/>
</svg>
<!-- outline panel -->
<svg style="left:0;top:0" width="2400" height="1350">
 <path d="M86 561 L112 561 M98 549 L86 561 L98 573" stroke="#444746" stroke-width="2.8" fill="none"/>
 <rect x="82" y="683" width="260" height="1.5" fill="#c7c7c7"/>
 <rect x="55" y="823" width="14" height="3" fill="#1a73e8"/>
</svg>
<div class="t" style="left:81px;top:631.1px;font-size:20px;color:#5f6368;-webkit-text-stroke:0.6px #5f6368;transform:scaleX(1.0);transform-origin:0 0">Summary</div>
<div class="t" style="left:81px;top:751.1px;font-size:20px;color:#5f6368;-webkit-text-stroke:0.6px #5f6368;transform:scaleX(1.0);transform-origin:0 0">Outline</div>
<div class="a" style="left:0;top:790px;width:330px;height:458px;overflow:hidden">
 <div class="t" style="left:81px;top:21.7px;font-size:25px;color:#1a73e8;-webkit-text-stroke:0.3px #1a73e8;transform:scaleX(1.04);transform-origin:0 0">10 Ways You Can Step Up Your Kitchen</div>
 <div class="t" style="left:81px;top:77.6px;font-size:25px;color:#444746;-webkit-text-stroke:0.3px #444746;transform:scaleX(1.04);transform-origin:0 0">1. Sleek Cabinetry Design</div>
 <div class="t" style="left:81px;top:133.4px;font-size:25px;color:#444746;-webkit-text-stroke:0.3px #444746;transform:scaleX(1.04);transform-origin:0 0">2. Integrated Appliances</div>
 <div class="t" style="left:81px;top:189.2px;font-size:25px;color:#444746;-webkit-text-stroke:0.3px #444746;transform:scaleX(1.04);transform-origin:0 0">3. Neutral Color Palette</div>
 <div class="t" style="left:81px;top:245.1px;font-size:25px;color:#444746;-webkit-text-stroke:0.3px #444746;transform:scaleX(1.04);transform-origin:0 0">4. Open Shelving</div>
 <div class="t" style="left:81px;top:300.9px;font-size:25px;color:#444746;-webkit-text-stroke:0.3px #444746;transform:scaleX(1.04);transform-origin:0 0">5. Under-Cabinet Lighting</div>
 <div class="t" style="left:81px;top:356.7px;font-size:25px;color:#444746;-webkit-text-stroke:0.3px #444746;transform:scaleX(1.04);transform-origin:0 0">6. High-Quality Countertops</div>
 <div class="t" style="left:81px;top:412.5px;font-size:25px;color:#444746;-webkit-text-stroke:0.3px #444746;transform:scaleX(1.04);transform-origin:0 0">7. Innovative Storage</div>
</div>
<!-- doc heading + body -->
<div class="t" style="left:0;top:713.4px;width:2452.5px;text-align:center;font-size:63px;font-weight:bold;color:#000;transform:scaleX(0.9576);transform-origin:1226.25px 0">10 Ways You Can Step Up Your</div>
<div class="t" style="left:0;top:792px;width:2452.5px;text-align:center;font-size:63px;font-weight:bold;color:#000;transform:scaleX(0.9576);transform-origin:1226.25px 0">Kitchen Interior with European Style</div>
<div class="t" style="left:0;top:871.8px;width:2452.5px;text-align:center;font-size:63px;font-weight:bold;color:#000;transform:scaleX(0.9576);transform-origin:1226.25px 0">Kitchen Design</div>
<div class="a" id="body" style="left:0;top:0;width:2400px;height:1250px;font-size:27px;color:#45494c">
 <div class="t" style="left:925.9px;top:987.8px;transform:scaleX(1.025);transform-origin:0 0">heart of every home, and its design plays a crucial role in creating</div>
 <div class="t" style="right:1474.1px;top:987.8px">A kitchen is the&nbsp;</div>
 <div class="t" style="left:907.0px;top:1026.1px;transform:scaleX(1.0275);transform-origin:0 0">aesthetically pleasing space. If you're looking to elevate your</div>
 <div class="t" style="right:1493.0px;top:1026.1px">a functional and&nbsp;</div>
 <div class="t" style="left:914.0px;top:1064.4px;transform:scaleX(1.032);transform-origin:0 0"><span style="text-decoration:underline;text-decoration-color:#f4a0ae;text-decoration-thickness:3px;text-underline-offset:5px">European style</span> kitchen design offers a perfect blend of</div>
 <div class="t" style="right:1486.0px;top:1064.4px">kitchen interior,&nbsp;</div>
 <div class="t" style="left:936.0px;top:1102.8px;transform:scaleX(1.032);transform-origin:0 0">functionality. In this blog post, we'll explore ten ways you can step</div>
 <div class="t" style="right:1464.0px;top:1102.8px">sophistication and&nbsp;</div>
 <div class="t" style="left:897.0px;top:1141.1px;transform:scaleX(1.029);transform-origin:0 0">interior with the elegance of European design, with a special focus</div>
 <div class="t" style="right:1503.0px;top:1141.1px">up your kitchen&nbsp;</div>
 <div class="t" style="left:955.7px;top:1179.4px;transform:scaleX(1.0194);transform-origin:0 0">at Gamma Cabinetry's website.</div>
 <div class="t" style="right:1444.3px;top:1179.4px">on the products available&nbsp;</div>
</div>
<!-- right card -->
<div class="a" style="left:1962px;top:541px;width:301px;height:707px;background:#fff;border:1.5px solid #c7c7c7;border-right:none;border-bottom:none;border-radius:22px 0 0 0;overflow:hidden">
 <div class="a" style="left:0;top:327px;width:310px;height:400px;background:#fcfbfa"></div>
</div>
<svg style="left:0;top:0" width="2400" height="1350">
 <g fill="#dadce0">
  <rect x="2103" y="622" width="60" height="3" rx="1.5"/><rect x="2103" y="631" width="48" height="3" rx="1.5"/>
  <rect x="2103" y="644" width="160" height="3" rx="1.5"/><rect x="2103" y="654" width="160" height="3" rx="1.5"/><rect x="2103" y="663" width="160" height="3" rx="1.5"/><rect x="2103" y="673" width="62" height="3" rx="1.5"/>
  <rect x="2103" y="789" width="160" height="3" rx="1.5"/><rect x="2103" y="798" width="160" height="3" rx="1.5"/><rect x="2103" y="808" width="160" height="3" rx="1.5"/><rect x="2103" y="817" width="160" height="3" rx="1.5"/><rect x="2103" y="827" width="62" height="3" rx="1.5"/>
 </g>
 <g stroke="#dadce0" stroke-width="1.2" fill="none">
  <path d="M2011 694 L2263 694 M2011 713 L2263 713 M2011 731 L2263 731 M2011 750 L2263 750 M2011 769 L2263 769 M2011 694 L2011 769 M2103 694 L2103 769 M2161 694 L2161 769 M2219 694 L2219 769"/>
 </g>
 <g fill="#9aa0a6"><rect x="2020" y="702" width="49" height="5" rx="2.5"/><rect x="2110" y="702" width="39" height="5" rx="2.5"/><rect x="2168" y="702" width="29" height="5" rx="2.5"/><rect x="2226" y="702" width="37" height="5" rx="2.5"/></g>
 <g fill="#dadce0"><rect x="2020" y="720" width="76" height="5" rx="2.5"/><rect x="2110" y="720" width="39" height="5" rx="2.5"/><rect x="2168" y="720" width="39" height="5" rx="2.5"/><rect x="2226" y="720" width="29" height="5" rx="2.5"/>
 <rect x="2020" y="739" width="46" height="5" rx="2.5"/><rect x="2110" y="739" width="30" height="5" rx="2.5"/><rect x="2168" y="739" width="44" height="5" rx="2.5"/><rect x="2226" y="739" width="23" height="5" rx="2.5"/>
 <rect x="2020" y="757" width="66" height="5" rx="2.5"/><rect x="2110" y="757" width="44" height="5" rx="2.5"/><rect x="2168" y="757" width="29" height="5" rx="2.5"/><rect x="2226" y="757" width="37" height="5" rx="2.5"/></g>
</svg>
<div class="a" style="left:1962px;top:880px;width:301px;height:368px;overflow:hidden">
 <div class="t" style="left:28.5px;top:30.1px;font-size:37.5px;color:#1f1f1f;transform:scaleX(1.03);transform-origin:0 0">Go pageless by making</div>
 <div class="t" style="left:29px;top:98.7px;font-size:25.5px;color:#444746;transform:scaleX(0.96);transform-origin:0 0">Save time formatting by making</div>
 <div class="t" style="left:29px;top:133.8px;font-size:25.5px;color:#444746;transform:scaleX(0.96);transform-origin:0 0">pageless your default format for</div>
 <div class="t" style="left:29px;top:168.6px;font-size:25.5px;color:#444746;transform:scaleX(0.96);transform-origin:0 0">document. Change this at any time by</div>
 <div class="t" style="left:29px;top:203.4px;font-size:25.5px;color:#444746;transform:scaleX(0.96);transform-origin:0 0">selecting <b style="color:#1f1f1f">Page setup</b> in the File menu.</div>
 <div class="t" style="left:28px;top:238.5px;font-size:25.5px;color:#0b57d0;transform:scaleX(0.976);transform-origin:0 0">Learn more</div>
 <div class="t" style="left:96px;top:354px;font-size:25px;color:#0b57d0;-webkit-text-stroke:0.5px #0b57d0;transform:scaleX(0.98);transform-origin:0 0">Dismiss</div>
 <div class="a" style="left:222px;top:333.5px;width:150px;height:64px;background:#0b57d0;border-radius:32px"></div>
 <div class="t" style="left:252px;top:354px;font-size:25px;color:#fff;-webkit-text-stroke:0.5px #fff">Set</div>
</div>
<!-- grammarly-ish badge -->
<div class="a" style="left:2160px;top:1116px;width:95px;height:52px;background:#fff;border:1.2px solid #dadce0;border-radius:14px 26px 26px 0"></div>
<svg style="left:0;top:0" width="2400" height="1350">
 <circle cx="2186" cy="1141" r="12" fill="#14a37f"/><rect x="2179" y="1154" width="14" height="5" rx="2" fill="#14a37f"/>
 <path d="M2186 1134 L2188 1139 L2193 1141 L2188 1143 L2186 1148 L2184 1143 L2179 1141 L2184 1139 Z" fill="#fff"/>
 <path d="M2211 1159 L2211 1142 A19 19 0 0 1 2250 1142 L2250 1148 A14 14 0 0 1 2236 1159 Z" fill="#d3163a"/>
 <text x="2222" y="1153" font-size="21" font-weight="bold" fill="#fff" font-family="Liberation Sans">3</text>
 <circle cx="2245" cy="1125" r="10" fill="#6d4fe0"/><path d="M2245 1119 L2245 1131 M2239 1125 L2251 1125" stroke="#fff" stroke-width="2.4"/>
</svg>
<!-- right scrollbar thumb -->
<div class="a" style="left:2270px;top:521px;width:14px;height:77px;background:#dadce0;border-radius:7px"></div>
<!-- side panel -->
<svg style="left:0;top:0" width="2400" height="1350">
 <rect x="2322" y="352" width="34" height="34" rx="3" fill="#4285f4"/>
 <rect x="2326" y="360" width="26" height="22" fill="#fff"/>
 <path d="M2322 381 L2322 383 Q2322 386 2325 386 L2352 386 L2356 382 L2356 381" fill="#34a853"/>
 <path d="M2356 378 L2356 383 L2351 386 L2351 378 Z" fill="#ea4335"/>
 <path d="M2322 378 L2322 383 Q2322 386 2325 386 L2329 386 L2329 378 Z" fill="#188038"/>
 <path d="M2352 360 L2356 360 L2356 378 L2352 378 Z" fill="#fbbc04"/>
 <text x="2339" y="379" font-size="15" font-weight="bold" fill="#4285f4" text-anchor="middle" font-family="Liberation Sans">31</text>
 <rect x="2322" y="450" width="34" height="34" rx="4" fill="#fbbc04"/>
 <circle cx="2339" cy="463" r="7" fill="#fff"/><rect x="2335" y="471" width="8" height="3" fill="#fff"/>
 <circle cx="2339" cy="564" r="12.5" stroke="#1a73e8" stroke-width="4.5" fill="none"/>
 <path d="M2332 564 L2337 569 L2350 555" stroke="#1a73e8" stroke-width="4" fill="none"/>
 <circle cx="2339" cy="652" r="5" fill="#0b57d0"/>
 <path d="M2327 676 L2327 670 Q2327 662 2335 662 L2343 662 Q2351 662 2351 670 L2351 676 Z" fill="#0b57d0"/>
 <path d="M2339 744 A12 12 0 0 1 2351 756 Q2351 764 2339 776 Q2327 764 2327 756 A12 12 0 0 1 2339 744 Z" fill="#34a853"/>
 <path d="M2339 744 A12 12 0 0 0 2327 756 Q2327 760 2330 764 L2339 756 Z" fill="#fbbc04"/>
 <path d="M2330 748 L2339 756 L2348 748 A12 12 0 0 0 2330 748 Z" fill="#4285f4"/>
 <path d="M2327 756 A12 12 0 0 1 2330 748 L2335 753 Z" fill="#ea4335"/>
 <circle cx="2339" cy="756" r="4" fill="#fff"/>
 <rect x="2322" y="837" width="34" height="1.5" fill="#dadce0"/>
 <path d="M2339 903 L2339 927 M2327 915 L2351 915" stroke="#1f1f1f" stroke-width="2.6"/>
 <path d="M2334 1219 L2342 1227 L2334 1235" stroke="#444746" stroke-width="2.6" fill="none"/>
</svg>
<div class="a" style="left:2312px;top:1050px;width:100px;height:65px;background:#fff;border-radius:33px;box-shadow:0 2px 10px rgba(0,0,0,0.12)"></div>
<svg style="left:0;top:0" width="2400" height="1350">
 <defs><linearGradient id="eg" x1="0" y1="0" x2="1" y2="1"><stop offset="0" stop-color="#7b3ff2"/><stop offset="1" stop-color="#2fa6f0"/></linearGradient></defs>
 <circle cx="2353" cy="1082" r="19" stroke="url(#eg)" stroke-width="4" fill="#fff"/>
 <rect x="2344" y="1076" width="3.5" height="11" rx="1.5" fill="#222"/>
 <path d="M2364 1077 L2357 1082 L2364 1087" stroke="#222" stroke-width="3" fill="none"/>
</svg>
<!-- horizontal scrollbar -->
<div class="a" style="left:27px;top:1256px;width:2048px;height:14px;background:#dadce0;border-radius:7px"></div>

<!-- ============ INSERT MENU ============ -->
<div class="a" style="left:325px;top:318px;width:560px;height:920px;background:#fff;border-radius:0 8px 8px 8px;box-shadow:0 1px 3px rgba(60,64,67,.3),0 4px 8px 3px rgba(60,64,67,.15);overflow:hidden">
 <div class="a" style="left:2px;top:180px;width:530px;height:56px;background:#f1f3f4"></div>
 <div class="a" style="left:2px;top:529.0px;width:530px;height:1.5px;background:#dadce0"></div>
 <div class="a" style="left:2px;top:614.8px;width:530px;height:1.5px;background:#dadce0"></div>
 <div class="a" style="left:2px;top:756.2px;width:530px;height:1.5px;background:#dadce0"></div>
 <div class="a" style="left:538px;top:10px;width:13px;height:609px;background:#dadce0;border-radius:7px"></div>
 <div class="t" style="left:67px;top:26.6px;font-size:25px;color:#3d4043;transform:scaleX(1.02);transform-origin:0 0">Image</div>
 <svg style="left:491px;top:33.8px" width="14" height="14"><path d="M1 1 L13 7 L1 13 Z" fill="#80868b"/></svg>
 <div class="t" style="left:67px;top:82.4px;font-size:25px;color:#3d4043;transform:scaleX(1.02);transform-origin:0 0">Table</div>
 <svg style="left:491px;top:89.6px" width="14" height="14"><path d="M1 1 L13 7 L1 13 Z" fill="#80868b"/></svg>
 <div class="t" style="left:67px;top:138.2px;font-size:25px;color:#3d4043;transform:scaleX(1.02);transform-origin:0 0">Drawing</div>
 <svg style="left:491px;top:145.4px" width="14" height="14"><path d="M1 1 L13 7 L1 13 Z" fill="#80868b"/></svg>
 <div class="t" style="left:67px;top:194.0px;font-size:25px;color:#3d4043;transform:scaleX(1.02);transform-origin:0 0">Chart</div>
 <svg style="left:491px;top:201.2px" width="14" height="14"><path d="M1 1 L13 7 L1 13 Z" fill="#1f1f1f"/></svg>
 <div class="t" style="left:67px;top:249.8px;font-size:25px;color:#3d4043;transform:scaleX(1.02);transform-origin:0 0">Horizontal line</div>
 <div class="t" style="left:67px;top:305.6px;font-size:25px;color:#3d4043;transform:scaleX(1.02);transform-origin:0 0">Emoji</div>
 <div class="t" style="left:67px;top:361.4px;font-size:25px;color:#3d4043;transform:scaleX(1.02);transform-origin:0 0">Smart chips</div>
 <svg style="left:491px;top:368.6px" width="14" height="14"><path d="M1 1 L13 7 L1 13 Z" fill="#80868b"/></svg>
 <div class="t" style="left:67px;top:417.2px;font-size:25px;color:#3d4043;transform:scaleX(1.02);transform-origin:0 0">Drop-down</div>
 <div class="t" style="left:67px;top:473.1px;font-size:25px;color:#3d4043;transform:scaleX(1.02);transform-origin:0 0">Footnote</div>
 <div class="t" style="right:55px;top:473.1px;font-size:25px;color:#5f6368">Ctrl+Alt+F</div>
 <div class="t" style="left:67px;top:558.8px;font-size:25px;color:#3d4043;transform:scaleX(1.02);transform-origin:0 0">Building blocks</div>
 <svg style="left:491px;top:566.0px" width="14" height="14"><path d="M1 1 L13 7 L1 13 Z" fill="#80868b"/></svg>
 <div class="t" style="left:67px;top:643.3px;font-size:25px;color:#3d4043;transform:scaleX(1.02);transform-origin:0 0">Special characters</div>
 <div class="t" style="left:67px;top:699.3px;font-size:25px;color:#3d4043;transform:scaleX(1.02);transform-origin:0 0">Equation</div>
 <div class="t" style="left:67px;top:783.8px;font-size:25px;color:#3d4043;transform:scaleX(1.02);transform-origin:0 0">Watermark</div>
 <div class="t" style="left:67px;top:839.8px;font-size:25px;color:#3d4043;transform:scaleX(1.02);transform-origin:0 0">Headers and footers</div>
 <svg style="left:491px;top:847.0px" width="14" height="14"><path d="M1 1 L13 7 L1 13 Z" fill="#80868b"/></svg>
 <div class="t" style="left:67px;top:895.8px;font-size:25px;color:#3d4043;transform:scaleX(1.02);transform-origin:0 0">Page numbers</div>
 <svg style="left:491px;top:903.0px" width="14" height="14"><path d="M1 1 L13 7 L1 13 Z" fill="#80868b"/></svg>
</div>
<svg style="left:0;top:0" width="2400" height="1350">
 <g stroke="#444746" stroke-width="2.4" fill="none">
  <rect x="352.2" y="348.2" width="22" height="22" rx="2"/>
  <rect x="352.2" y="404" width="22" height="22" rx="2"/><path d="M352 410.5 L374 410.5 M359.5 410 L359.5 426 M367 410 L367 426"/>
  <rect x="352.2" y="459.8" width="22" height="22" rx="2"/>
  <rect x="352.2" y="515.6" width="22" height="22" rx="2"/>
  <path d="M353 582 L374 582" stroke-width="3"/>
  <circle cx="363" cy="637" r="12.2" stroke-width="2.5"/>
  <path d="M353 685 L366.5 685 Q371 685 371 689 M357 694 L353 694 Q349 694 349 689.5 Q349 685 353 685" stroke-width="2.3"/>
  <rect x="357.2" y="692.3" width="20.2" height="9.2" rx="4.6" stroke-width="2.3"/>
  <rect x="349.5" y="741.2" width="27.8" height="16.8" rx="8.4" stroke-width="2.5"/>
  <path d="M351 798.3 L375 798.3 M351 805.3 L375 805.3 M351 812 L366.5 812" stroke-width="2.8"/>
  <path d="M352 882 L364 882 M352 882 L352 901 L374 901 L374 887 M368 882 L376 882 M372 878 L372 886"/>
  <path d="M352 1112 L352 1128 L374 1128 L374 1108 L367 1101 L352 1101 Z"/>
  <path d="M352 1162 L374 1162 M352 1168 L374 1168 L374 1178 L352 1178 Z M352 1184 L374 1184"/>
  <path d="M358 1219 L355 1237 M367 1219 L364 1237 M352 1225 L373 1225 M351 1232 L372 1232" stroke-width="2.2"/>
 </g>
 <g fill="#444746">
  <path d="M357 365 L361 360 L364 363 L367 358 L371 365 Z"/>
  <circle cx="359.5" cy="467" r="4"/><rect x="363" y="470" width="7" height="7"/>
  <rect x="357.5" y="527" width="2.5" height="7"/><rect x="362" y="522" width="2.5" height="12"/><rect x="366.5" y="529" width="2.5" height="5"/>
  <circle cx="358.6" cy="634" r="2"/><circle cx="368" cy="634" r="2"/><path d="M356.5 640.5 L369.5 640.5 Q369 646 363 646 Q357 646 356.5 640.5 Z"/><circle cx="353.8" cy="689.2" r="1.6"/><path d="M366.5 695.5 L373 695.5 L369.75 699 Z"/>
  <path d="M359 747.5 L368 747.5 L363.5 752.5 Z" />
  <rect x="356" y="889" width="13" height="2"/><rect x="356" y="893" width="13" height="2"/>
  <circle cx="363" cy="1117" r="3"/><path d="M358 1123 L368 1123 L368 1125 L358 1125 Z"/>
 </g>
 <text x="349.5" y="986" font-size="29" fill="#444746" stroke="#444746" stroke-width="0.6" font-family="Liberation Sans">Ω</text>
 <text x="349" y="1043" font-size="28" fill="#444746" stroke="#444746" stroke-width="0.5" font-family="Liberation Sans">π</text>
 <text x="369.5" y="1030" font-size="11" fill="#444746" font-family="Liberation Sans" font-weight="bold">2</text>
</svg>
<!-- ============ CHART SUBMENU ============ -->
<div class="a" style="left:855px;top:499px;width:456px;height:332px;background:#fff;border-radius:8px;box-shadow:0 1px 3px rgba(60,64,67,.3),0 4px 8px 3px rgba(60,64,67,.15);overflow:hidden">
 <div class="a" style="left:3px;top:179px;width:452px;height:55px;background:#f1f3f4"></div>
 <div class="a" style="left:2px;top:249px;width:454px;height:1.5px;background:#dadce0"></div>
 <div class="t" style="left:68px;top:26.4px;font-size:25px;color:#3f4245;transform:scaleX(1.02);transform-origin:0 0">Bar</div>
 <div class="t" style="left:68px;top:81.4px;font-size:25px;color:#3f4245;transform:scaleX(1.02);transform-origin:0 0">Column</div>
 <div class="t" style="left:68px;top:137.3px;font-size:25px;color:#3f4245;transform:scaleX(1.02);transform-origin:0 0">Line</div>
 <div class="t" style="left:68px;top:192.8px;font-size:25px;color:#3f4245;transform:scaleX(1.02);transform-origin:0 0">Pie</div>
 <div class="t" style="left:68px;top:278.8px;font-size:25px;color:#4a4d50;transform:scaleX(1.02);transform-origin:0 0">From Sheets</div>
</div>
<svg style="left:0;top:0" width="2400" height="1350">
 <g stroke="#444746" stroke-width="2.4" fill="none">
  <rect x="882" y="527" width="23" height="23" rx="2"/>
  <path d="M887 533 L900 533 M887 538.5 L897 538.5 M887 544 L893 544"/>
  <rect x="882" y="582.5" width="23" height="23" rx="2"/>
  <rect x="882" y="638" width="23" height="23" rx="2"/>
  <path d="M884 657 L890 648 L895 653 L904 642"/>
  <circle cx="893.5" cy="705" r="12"/><path d="M893.5 693 L893.5 717 M893.5 705 L905.5 705"/>
 </g>
 <g fill="#444746"><rect x="887.5" y="591" width="2.5" height="10"/><rect x="892" y="587" width="2.5" height="14"/><rect x="896.5" y="595" width="2.5" height="6"/></g>
 <rect x="881" y="779" width="25" height="25" rx="2.5" fill="#1fa463"/>
 <path d="M881 791.5 L906 791.5 M891.5 779 L891.5 804" stroke="#fff" stroke-width="2.2"/>
</svg>
<svg style="left:0;top:0" width="2400" height="1350">
 <path d="M1391 700 L1644 700 Q1645 700 1645 707 Q1645 715 1644 715 L1391 715 Z" fill="#ff0000"/>
 <rect x="1380" y="699.5" width="265" height="16" rx="3" fill="#ff0000"/>
 <path d="M1333.5 706.7 L1391 676.5 Q1393 677 1392.5 680 Q1389 706 1392.5 733 Q1393 737 1391 737 Z" fill="#ff0000" stroke="#ff0000" stroke-width="1.5" stroke-linejoin="round"/>
</svg>
<!-- ============ TASKBAR ============ -->
<div class="a" style="left:12px;top:1276px;width:2376px;height:70px;background:linear-gradient(90deg,#444548 0,#444548 40%,#393d44 70%,#33302f 100%);border-radius:0 0 36px 36px;overflow:hidden">
 <div class="a" style="left:0;top:0;width:83px;height:70px;background:#3f3f3f"></div>
 <div class="a" style="left:83px;top:0;width:501px;height:70px;background:#f0f0f0;border-top:1.5px solid #cfcfcf"></div>
 <div class="a" style="left:1100px;top:0;width:80px;height:70px;background:#5a5b5e"></div>
 <div class="a" style="left:1100px;top:66px;width:80px;height:4px;background:#76b9ed"></div>
</div>
<svg style="left:0;top:0" width="2400" height="1350">
 <path d="M40 1300 L51 1298.5 L51 1310 L40 1310 Z M53 1298.2 L67 1296.5 L67 1310 L53 1310 Z M40 1312 L51 1312 L51 1323.5 L40 1322 Z M53 1312 L67 1312 L67 1325.5 L53 1323.8 Z" fill="#fff"/>
 <circle cx="134.5" cy="1306" r="9.5" stroke="#1a1a1a" stroke-width="2" fill="none"/>
 <path d="M128 1313 L117 1324" stroke="#1a1a1a" stroke-width="2.2"/>
 <!-- castle -->
 <defs><clipPath id="cc"><rect x="455" y="1277" width="140" height="68"/></clipPath></defs>
 <g clip-path="url(#cc)">
 <ellipse cx="500" cy="1340" rx="40" ry="22" fill="#6a9a2c"/>
 <rect x="470" y="1330" width="18" height="16" fill="#dfe6f3"/>
 <rect x="484" y="1305" width="12" height="40" fill="#c9d6ea"/>
 <path d="M490 1292 L493 1305 L487 1305 Z" fill="#c0304a"/>
 <ellipse cx="500" cy="1330" rx="20" ry="14" fill="#b9abe0"/>
 <rect x="513" y="1306" width="18" height="38" fill="#b6862c"/>
 <rect x="516" y="1290" width="12" height="18" fill="#e0a33a"/>
 <path d="M522 1278 L525 1292 L519 1292 Z" fill="#c0304a"/>
 <ellipse cx="537" cy="1343" rx="26" ry="18" fill="#b8b1e3"/>
 <path d="M534 1321 L537 1330 L531 1330 Z" fill="#c0304a"/>
 <rect x="541" y="1287" width="46" height="58" fill="#a7aedf"/>
 <rect x="541" y="1287" width="20" height="58" fill="#9db3d8"/>
 <path d="M541 1287 L541 1281 L545 1285 L549 1281 L553 1285 L557 1281 L561 1285 L565 1281 L569 1285 L573 1281 L577 1285 L581 1281 L585 1285 L587 1281 L587 1288 Z" fill="#b5b8e8"/>
 <g fill="#1f2a44"><rect x="545" y="1305" width="2.5" height="8"/><rect x="549" y="1305" width="2.5" height="8"/><rect x="553" y="1305" width="2.5" height="8"/><rect x="565" y="1305" width="3" height="8"/><rect x="570" y="1305" width="3" height="8"/><rect x="575" y="1305" width="3" height="8"/></g>
 </g>
 <!-- task view -->
 <g stroke="#fff" stroke-width="2" fill="none">
  <path d="M624 1297 L624 1300 L644 1300 L644 1297 M624 1325 L624 1322 L644 1322 L644 1325 M626 1300 L626 1322 M642 1300 L642 1322"/>
  <path d="M650 1297 L650 1325"/>
 </g>
 <rect x="647" y="1306" width="6" height="6" fill="#fff"/>
 <!-- edge -->
 <defs>
  <linearGradient id="edg" x1="0" y1="0" x2="1" y2="1"><stop offset="0" stop-color="#2fc3ea"/><stop offset="0.5" stop-color="#1a8ad8"/><stop offset="1" stop-color="#0d5bb3"/></linearGradient>
  <linearGradient id="edg2" x1="0" y1="0" x2="1" y2="0"><stop offset="0" stop-color="#36b6f0"/><stop offset="1" stop-color="#50d470"/></linearGradient>
  <radialGradient id="ffx" cx="0.5" cy="0.6" r="0.6"><stop offset="0" stop-color="#ffb93a"/><stop offset="0.6" stop-color="#ff5a2a"/><stop offset="1" stop-color="#e3175a"/></radialGradient>
  <radialGradient id="wth" cx="0.35" cy="0.35" r="0.7"><stop offset="0" stop-color="#ffc233"/><stop offset="1" stop-color="#f06a1c"/></radialGradient>
 </defs>
 <circle cx="727" cy="1311" r="21" fill="url(#edg)"/>
 <path d="M707 1305 Q712 1290 728 1290 Q746 1290 748 1309 Q748 1318 738 1318 L718 1318 Q722 1306 732 1307 Q722 1298 707 1305 Z" fill="url(#edg2)"/>
 <ellipse cx="733" cy="1320" rx="10" ry="7" fill="#0d4f9e"/>
 <!-- firefox -->
 <circle cx="811" cy="1312" r="20" fill="url(#ffx)"/>
 <circle cx="813" cy="1313" r="9" fill="#7b3fd6"/>
 <path d="M812 1290 Q822 1296 826 1305 Q828 1294 820 1289 Z" fill="#ffcf3a"/>
 <!-- explorer -->
 <path d="M879 1295 L893 1295 L896 1299 L914 1299 L914 1327 L879 1327 Z" fill="#f8d56a"/>
 <rect x="879" y="1302" width="35" height="25" fill="#fbdf7d"/>
 <path d="M887 1327 L887 1316 L906 1316 L906 1327 L901 1327 L901 1321 L892 1321 L892 1327 Z" fill="#2f8ee0"/>
 <!-- store -->
 <rect x="962" y="1297" width="40" height="34" rx="4" fill="#f4f4f4"/>
 <path d="M972 1300 L972 1292 Q972 1289 975 1289 L989 1289 Q992 1289 992 1292 L992 1300" stroke="#2aa6e8" stroke-width="3" fill="none"/>
 <rect x="973" y="1307" width="8" height="8" fill="#f25022"/><rect x="983" y="1307" width="8" height="8" fill="#7fba00"/>
 <rect x="973" y="1317" width="8" height="8" fill="#00a4ef"/><rect x="983" y="1317" width="8" height="8" fill="#ffb900"/>
 <!-- mail -->
 <path d="M1047 1303 L1067 1290 L1088 1303 L1088 1330 L1047 1330 Z" fill="#1c8fe0"/>
 <path d="M1047 1303 L1067 1318 L1088 1303 Z" fill="#f2f6fa"/>
 <path d="M1047 1330 L1067 1314 L1088 1330 Z" fill="#36a7ef"/>
 <!-- chrome -->
 <circle cx="1151" cy="1311" r="20" fill="#db4437"/>
 <path d="M1151 1311 L1131 1316 A20 20 0 0 0 1161 1328 Z" fill="#0f9d58"/>
 <path d="M1151 1311 L1171 1306 A20 20 0 0 1 1161 1328 Z" fill="#f4b400"/>
 <circle cx="1151" cy="1311" r="9" fill="#fff"/><circle cx="1151" cy="1311" r="7" fill="#4285f4"/>
 <svg x="1151" y="1310" width="24" height="24" viewBox="0 0 56 56"><use href="#av"/></svg>
 <!-- weather -->
 <circle cx="1712" cy="1312" r="18" fill="url(#wth)"/>
 <circle cx="1723" cy="1300" r="8.5" fill="#c42b1c"/>
 <text x="1723" y="1305" font-size="12" fill="#fff" text-anchor="middle" font-family="Liberation Sans">1</text>
 <!-- tray -->
 <path d="M1924 1318 L1934 1307 L1944 1318" stroke="#fff" stroke-width="2" fill="none"/>
 <rect x="1963" y="1304" width="24" height="14" stroke="#fff" stroke-width="2" fill="none"/>
 <rect x="1966" y="1307" width="11" height="8" fill="#fff"/><rect x="1988" y="1308" width="2.5" height="6" fill="#fff"/>
 <path d="M2011 1303 L2011 1317 M2025 1303 L2025 1317 M2011 1303 L2025 1303 M2011 1317 L2025 1317 M2025 1308 L2029 1305 L2029 1315 L2025 1312 M2014 1299 Q2018 1297 2022 1299 M2014 1322 Q2018 1324 2022 1322" stroke="#fff" stroke-width="1.8" fill="none"/>
 <path d="M2052 1324 Q2054 1304 2072 1303 M2057 1324 Q2059 1309 2072 1308 M2062 1324 Q2063 1314 2072 1313" stroke="#fff" stroke-width="1.6" fill="none"/>
 <circle cx="2069" cy="1322" r="2" fill="#fff"/>
 <path d="M2090 1318 Q2086 1318 2086 1313 Q2086 1309 2091 1309 Q2093 1303 2099 1303 Q2106 1303 2107 1310 Q2111 1311 2111 1315 Q2111 1318 2107 1318 Z" fill="#c8c8c8"/>
 <circle cx="2106" cy="1317" r="7" fill="#e81123"/>
 <path d="M2103 1314 L2109 1320 M2109 1314 L2103 1320" stroke="#fff" stroke-width="1.6"/>
 <path d="M2319 1298 L2345 1298 L2345 1317 L2329 1317 L2324 1322 L2324 1317 L2319 1317 Z" fill="#fff"/>
 <path d="M2323 1303 L2341 1303 M2323 1308 L2341 1308 M2323 1312 L2335 1312" stroke="#333" stroke-width="1.5"/>
 <circle cx="2344" cy="1323" r="13" fill="#333" stroke="#aaa" stroke-width="1.2"/>
 <text x="2344" y="1331" font-size="19" fill="#fff" text-anchor="middle" font-family="Liberation Sans">2</text>
 <rect x="2369" y="1280" width="1.5" height="45" fill="#777"/>
</svg>
<div class="t" style="left:164px;top:1298.4px;font-size:27px;color:#2b2b2b;transform:scaleX(0.945);transform-origin:0 0">Type here to search</div>
<div class="t" style="left:1748px;top:1298px;font-size:25px;color:#fff;transform:scaleX(0.92);transform-origin:left">28°C&nbsp;&nbsp;Sunny</div>
<div class="t" style="left:2132px;top:1285px;font-size:21px;color:#fff;transform:scaleX(0.92);transform-origin:left">ENG</div>
<div class="t" style="left:2141px;top:1315px;font-size:21px;color:#fff;transform:scaleX(0.92);transform-origin:left">IN</div>
<div class="t" style="left:2216px;top:1285px;font-size:21px;color:#fff;transform:scaleX(0.92);transform-origin:left">12:17</div>
<div class="t" style="left:2194px;top:1315px;font-size:21px;color:#fff;transform:scaleX(0.92);transform-origin:left">3/19/2024</div>
</body></html>
